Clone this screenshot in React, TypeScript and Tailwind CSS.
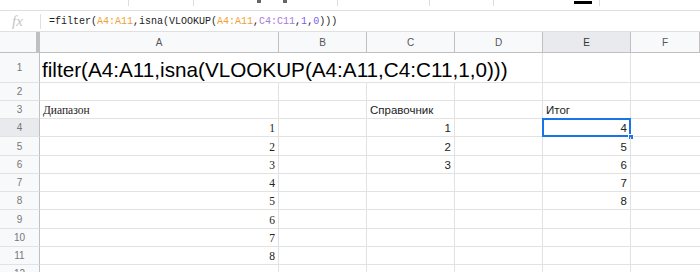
import React from "react";

const grid = "grid grid-cols-[40px_239px_88px_88px_88px_88px_1fr]";
const sans = "font-['Liberation_Sans',Arial,sans-serif]";
const serif = "font-['Liberation_Serif','Times_New_Roman',serif]";

type Row = {
  n: number;
  h: string;
  a?: string;
  aLeft?: boolean;
  c?: string;
  cLeft?: boolean;
  e?: string;
  eLeft?: boolean;
  sel?: boolean;
};

const rows: Row[] = [
  { n: 2, h: "h-[18px]" },
  { n: 3, h: "h-[18px]", a: "Диапазон", aLeft: true, c: "Справочник", cLeft: true, e: "Итог", eLeft: true },
  { n: 4, h: "h-[18px]", a: "1", c: "1", e: "4", sel: true },
  { n: 5, h: "h-[19px]", a: "2", c: "2", e: "5" },
  { n: 6, h: "h-[18px]", a: "3", c: "3", e: "6" },
  { n: 7, h: "h-[18px]", a: "4", e: "7" },
  { n: 8, h: "h-[18px]", a: "5", e: "8" },
  { n: 9, h: "h-[19px]", a: "6" },
  { n: 10, h: "h-[18px]", a: "7" },
  { n: 11, h: "h-[18px]", a: "8" },
  { n: 12, h: "h-[18px]" },
];

function Cell({ text, left, font, selected }: { text?: string; left?: boolean; font: string; selected?: boolean }) {
  return (
    <div
      className={`relative flex items-end border-r border-b border-[#e2e2e2] px-[3px] pb-[1px] text-[11.5px] leading-[14px] text-[#222] whitespace-nowrap ${font} ${
        left ? "justify-start" : "justify-end"
      }`}
    >
      {text}
      {selected && (
        <>
          <div className="absolute -left-px -top-px right-[-1px] bottom-[-1px] border-2 border-[#1a73e8]" />
          <div className="absolute right-[-4px] bottom-[-4px] h-[6px] w-[6px] bg-[#1a73e8] border border-white" />
        </>
      )}
    </div>
  );
}

export default function App() {
  return (
    <div className={`w-[700px] h-[272px] overflow-hidden bg-white ${sans}`}>
      {/* toolbar remnant */}
      <div className="relative h-[11px] border-b border-[#e0e0e0]">
        {[128, 193, 337, 429, 493, 599].map((x) => (
          <div key={x} className="absolute top-0 h-[6px] w-px bg-[#dadce0]" style={{ left: x }} />
        ))}
        <div className="absolute left-[257px] top-0 h-[3px] w-[4px] bg-[#666]" />
        <div className="absolute left-[283px] top-0 h-[3px] w-[4px] bg-[#666]" />
        <div className="absolute left-[574px] top-[1px] h-[3px] w-[18px] bg-black" />
      </div>

      {/* formula bar */}
      <div className="flex h-[21px] items-center border-b border-[#e0e0e0]">
        <div className={`w-[40px] pl-[12px] text-[15px] italic text-[#c4c4c4] ${serif} leading-none`}>fx</div>
        <div className="h-[15px] w-px bg-[#e0e0e0]" />
        <div className="pl-[8px] font-['Liberation_Mono',monospace] text-[10px] text-[#222] whitespace-nowrap">
          =filter(<span className="text-[#f0a236]">A4:A11</span>,isna(VLOOKUP(
          <span className="text-[#f0a236]">A4:A11</span>,<span className="text-[#a97ad8]">C4:C11</span>,
          <span className="text-[#7b5ff0]">1</span>,<span className="text-[#7b5ff0]">0</span>)))
        </div>
      </div>

      {/* column headers */}
      <div className={`${grid} h-[21px] text-[10px] text-[#555]`}>
        <div className="border-r-4 border-b border-[#c0c0c0] bg-[#f8f9fa]" />
        {["A", "B", "C", "D", "E", "F"].map((l) => (
          <div
            key={l}
            className={`flex items-center justify-center border-r border-b border-[#c0c0c0] ${
              l === "E" ? "bg-[#e8eaed] text-[#333]" : "bg-[#f8f9fa]"
            }`}
          >
            {l}
          </div>
        ))}
      </div>

      {/* row 1 */}
      <div className={`${grid} h-[30px]`}>
        <div className="flex items-center justify-center border-r border-b border-r-[#c0c0c0] border-b-[#e2e2e2] bg-[#f8f9fa] text-[10px] text-[#777]">
          1
        </div>
        <div className="col-span-4 flex items-end border-r border-b border-[#e2e2e2] pl-[2px] pb-[1px] text-[20.7px] leading-[23px] text-black whitespace-nowrap">
          filter(A4:A11,isna(VLOOKUP(A4:A11,C4:C11,1,0)))
        </div>
        <div className="border-r border-b border-[#e2e2e2]" />
        <div className="border-b border-[#e2e2e2]" />
      </div>

      {rows.map((r) => (
        <div key={r.n} className={`${grid} ${r.h}`}>
          <div
            className={`flex items-center justify-center border-r border-b border-r-[#c0c0c0] border-b-[#e2e2e2] text-[10px] text-[#777] ${
              r.sel ? "bg-[#e8eaed]" : "bg-[#f8f9fa]"
            }`}
          >
            {r.n}
          </div>
          <Cell text={r.a} left={r.aLeft} font={serif} />
          <Cell font={sans} />
          <Cell text={r.c} left={r.cLeft} font={sans} />
          <Cell font={sans} />
          <Cell text={r.e} left={r.eLeft} font={sans} selected={r.sel} />
          <div className="border-b border-[#e2e2e2]" />
        </div>
      ))}
    </div>
  );
}
